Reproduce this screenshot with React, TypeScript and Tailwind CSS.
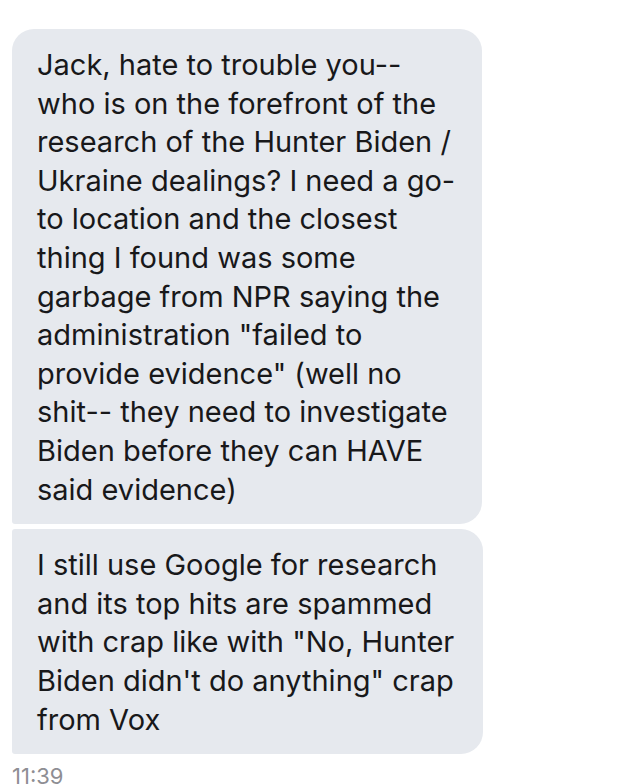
const first = [
  "Jack, hate to trouble you--",
  "who is on the forefront of the",
  "research of the Hunter Biden /",
  "Ukraine dealings? I need a go-",
  "to location and the closest",
  "thing I found was some",
  "garbage from NPR saying the",
  'administration "failed to',
  'provide evidence" (well no',
  "shit-- they need to investigate",
  "Biden before they can HAVE",
  "said evidence)",
];

const second = [
  "I still use Google for research",
  "and its top hits are spammed",
  'with crap like with "No, Hunter',
  "Biden didn't do anything\" crap",
  "from Vox",
];

function Bubble({ lines, className }: { lines: string[]; className: string }) {
  return (
    <div className={"bg-[#e6e9ee] pl-[25px] pr-4 pt-[17px] pb-[15px] text-[29px] leading-[38.6px] text-[#18181a] " + className}>
      {lines.map((l, i) => (
        <div key={i} className="whitespace-nowrap">{l}</div>
      ))}
    </div>
  );
}

export default function App() {
  return (
    <main
      className="h-[784px] overflow-hidden bg-white pl-[12px] pt-[29px]"
      style={{ fontFamily: "Inter, 'Noto Sans', sans-serif" }}
    >
      <div className="flex flex-col gap-[5px]">
        {/* first message */}
        <Bubble lines={first} className="w-[470px] rounded-[22px] rounded-bl-[3px]" />
        {/* second message */}
        <Bubble lines={second} className="w-[471px] rounded-[22px] rounded-tl-[3px] rounded-bl-[3px]" />
      </div>
      <div className="mt-[6px] text-[22px] leading-normal text-[#8e8e93]">11:39</div>
    </main>
  );
}
